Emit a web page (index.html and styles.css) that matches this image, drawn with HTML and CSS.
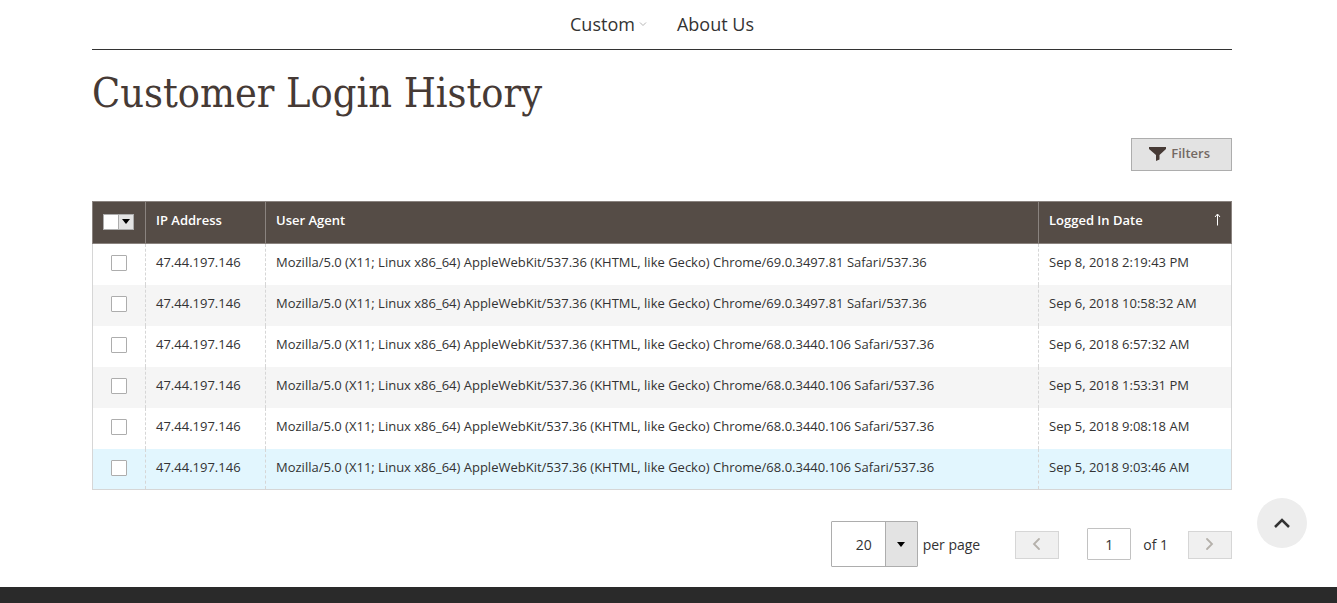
FILE: index.html
```html
<!DOCTYPE html>
<html lang="en">
<head>
<meta charset="utf-8">
<title>Customer Login History</title>
<link rel="stylesheet" href="styles.css">
</head>
<body>
<div class="page">
  <nav class="nav">
    <a href="#" class="nav-link">Custom
      <svg class="nav-caret" width="8" height="6" viewBox="0 0 8 6" fill="none" stroke="#b5b5b5"><path d="M1 1.500l3 3 3-3"/></svg>
    </a>
    <a href="#" class="nav-link">About Us</a>
  </nav>
  <main>
    <h1 class="title">Customer Login History</h1>
    <div class="toolbar">
      <button type="button" class="filters">
        <svg width="17" height="16" viewBox="0 0 17 16" fill="#463a35"><path d="M0 2h17v2l-6.500 6v4.500l-3.500 1.500v-6l-7-6z"/></svg>
        Filters
      </button>
    </div>
    <table class="grid">
      <thead>
        <tr>
          <th class="col-check">
            <div class="multicheck">
              <input type="checkbox" class="multicheck-box" aria-label="Select all">
              <button type="button" class="multicheck-toggle" aria-label="Selection options"><span class="triangle"></span></button>
            </div>
          </th>
          <th class="col-ip">IP Address</th>
          <th>User Agent</th>
          <th class="col-date"><div class="sorted">Logged In Date
            <svg width="7" height="13" viewBox="0 0 7 13" fill="none" stroke="#fff"><path d="M3.500 12.500v-11M1 4l2.500-3 2.500 3"/></svg></div></th>
        </tr>
      </thead>
      <tbody>
        <tr><td class="col-check"><input type="checkbox" class="check" aria-label="Select row 1"></td><td>47.44.197.146</td><td>Mozilla/5.0 (X11; Linux x86_64) AppleWebKit/537.36 (KHTML, like Gecko) Chrome/69.0.3497.81 Safari/537.36</td><td>Sep 8, 2018 2:19:43 PM</td></tr>
        <tr><td class="col-check"><input type="checkbox" class="check" aria-label="Select row 2"></td><td>47.44.197.146</td><td>Mozilla/5.0 (X11; Linux x86_64) AppleWebKit/537.36 (KHTML, like Gecko) Chrome/69.0.3497.81 Safari/537.36</td><td>Sep 6, 2018 10:58:32 AM</td></tr>
        <tr><td class="col-check"><input type="checkbox" class="check" aria-label="Select row 3"></td><td>47.44.197.146</td><td>Mozilla/5.0 (X11; Linux x86_64) AppleWebKit/537.36 (KHTML, like Gecko) Chrome/68.0.3440.106 Safari/537.36</td><td>Sep 6, 2018 6:57:32 AM</td></tr>
        <tr><td class="col-check"><input type="checkbox" class="check" aria-label="Select row 4"></td><td>47.44.197.146</td><td>Mozilla/5.0 (X11; Linux x86_64) AppleWebKit/537.36 (KHTML, like Gecko) Chrome/68.0.3440.106 Safari/537.36</td><td>Sep 5, 2018 1:53:31 PM</td></tr>
        <tr><td class="col-check"><input type="checkbox" class="check" aria-label="Select row 5"></td><td>47.44.197.146</td><td>Mozilla/5.0 (X11; Linux x86_64) AppleWebKit/537.36 (KHTML, like Gecko) Chrome/68.0.3440.106 Safari/537.36</td><td>Sep 5, 2018 9:08:18 AM</td></tr>
        <tr class="is-hovered"><td class="col-check"><input type="checkbox" class="check" aria-label="Select row 6"></td><td>47.44.197.146</td><td>Mozilla/5.0 (X11; Linux x86_64) AppleWebKit/537.36 (KHTML, like Gecko) Chrome/68.0.3440.106 Safari/537.36</td><td>Sep 5, 2018 9:03:46 AM</td></tr>
      </tbody>
    </table>
    <div class="pager">
      <div class="page-size">
        <div class="select-wrap">
          <select id="page-size" class="size-select"><option>20</option><option>30</option><option>50</option></select>
          <span class="select-arrow"><span class="triangle"></span></span>
        </div>
        <label for="page-size">per page</label>
      </div>
      <button type="button" class="step" aria-label="Previous page" disabled><svg width="9" height="14" viewBox="0 0 9 14" fill="none" stroke="#b5b1ab" stroke-width="1.800" stroke-linecap="round"><path d="M7 2L2 7l5 5"/></svg></button>
      <div class="current">
        <input type="text" id="page-number" class="page-input" value="1">
        <label for="page-number">of 1</label>
      </div>
      <button type="button" class="step" aria-label="Next page" disabled><svg width="9" height="14" viewBox="0 0 9 14" fill="none" stroke="#b5b1ab" stroke-width="1.800" stroke-linecap="round"><path d="M2 2l5 5-5 5"/></svg></button>
    </div>
  </main>
</div>
<footer class="footer"></footer>
<a href="#" class="to-top" aria-label="Back to top"><svg width="16" height="10" viewBox="0 0 16 10" fill="none" stroke="#333" stroke-width="2.500"><path d="M1 9l7-7 7 7"/></svg></a>
</body>
</html>
```
FILE: styles.css
```css
* { box-sizing: border-box; }
body {
  margin: 0;
  min-height: 100vh;
  display: flex;
  flex-direction: column;
  background: #fff;
  color: #333;
  font: 13px/20px "Open Sans", sans-serif;
}
button, input, select { font: inherit; color: inherit; margin: 0; }
.page {
  width: 100%;
  max-width: 1153px;
  margin: 0 auto;
  padding-right: 13px;
}
.nav {
  display: flex;
  justify-content: center;
  gap: 30px;
  height: 50px;
  padding-bottom: 2px;
  border-bottom: 1px solid #333;
}
.nav-link {
  display: flex;
  align-items: center;
  gap: 4px;
  color: #333;
  font-size: 18px;
  text-decoration: none;
}
.title {
  margin: 16px 0 18px;
  color: #463a35;
  font: 400 41px/54px "DejaVu Serif Condensed", "DejaVu Serif", serif;
}
.toolbar { display: flex; justify-content: flex-end; margin-bottom: 30px; }
.filters {
  display: flex;
  align-items: center;
  gap: 5px;
  height: 33px;
  padding: 0 21px 3px 17px;
  border: 1px solid #adadad;
  background: #e3e3e3;
  color: #736963;
  font-weight: 600;
}
.grid { width: 100%; border-collapse: collapse; border: 1px solid #d6d6d6; }
.grid th, .grid td { padding: 8px 10px 12px; text-align: left; }
.grid th {
  height: 42px;
  padding: 7px 10px 13px;
  background: #554c46;
  border: 1px solid #8a837f;
  color: #fff;
  font-weight: 600;
}
.grid td { height: 41px; border-left: 1px dashed #d6d6d6; }
.grid td:first-child { border-left: 1px solid #d6d6d6; }
.grid tbody tr:nth-child(even) { background: #f5f5f5; }
.grid tbody .is-hovered:nth-child(even) { background: #e2f6fe; }
.grid .col-check { width: 53px; padding: 0 1px 2px 0; }
.col-ip { width: 120px; }
.col-date { width: 193px; }
.sorted { display: flex; justify-content: space-between; align-items: center; }
.multicheck {
  display: flex;
  width: 31px;
  height: 16px;
  margin: 0 auto;
  border: 1px solid #adadad;
  background: #fff;
}
.multicheck-box { appearance: none; width: 14px; height: 14px; }
.multicheck-toggle {
  flex: 1;
  display: flex;
  align-items: center;
  justify-content: center;
  padding: 0;
  border: 0;
  border-left: 1px solid #adadad;
  background: #e3e3e3;
}
.triangle {
  border: solid transparent;
  border-width: 5px 4px 0;
  border-top-color: #000;
}
.check {
  appearance: none;
  display: block;
  width: 16px;
  height: 16px;
  margin: 0 auto;
  border: 1px solid #adadad;
  border-radius: 1px;
  background: #fff;
}
.pager {
  display: flex;
  align-items: center;
  justify-content: flex-end;
  margin: 31px 0 20px;
  font-size: 14px;
}
.page-size { display: flex; align-items: center; gap: 5px; margin-right: 35px; }
.page-size label, .current label { padding-top: 2px; }
.select-wrap { position: relative; }
.size-select {
  appearance: none;
  display: block;
  width: 87px;
  height: 46px;
  padding: 2px 0 0 24px;
  border: 1px solid #adadad;
  border-radius: 1px;
  background: #fff;
}
.select-arrow {
  position: absolute;
  top: 1px;
  right: 1px;
  bottom: 1px;
  width: 32px;
  display: flex;
  align-items: center;
  justify-content: center;
  border-left: 1px solid #adadad;
  background: #e3e3e3;
  pointer-events: none;
}
.step {
  display: flex;
  align-items: center;
  justify-content: center;
  width: 44px;
  height: 28px;
  margin-top: 2px;
  padding: 0 2px 2px 0;
  border: 1px solid #d6d6d6;
  background: #f0f0f0;
}
.current { display: flex; align-items: center; gap: 12px; margin: 0 20px 0 28px; }
.page-input {
  width: 44px;
  height: 32px;
  padding: 0;
  border: 1px solid #c2c2c2;
  border-radius: 1px;
  text-align: center;
}
.footer { flex: 1; min-height: 16px; background: #2a2a2a; }
.to-top {
  position: fixed;
  right: 30px;
  bottom: 55px;
  display: flex;
  align-items: center;
  justify-content: center;
  width: 50px;
  height: 50px;
  border-radius: 50%;
  background: #ededed;
}
```
